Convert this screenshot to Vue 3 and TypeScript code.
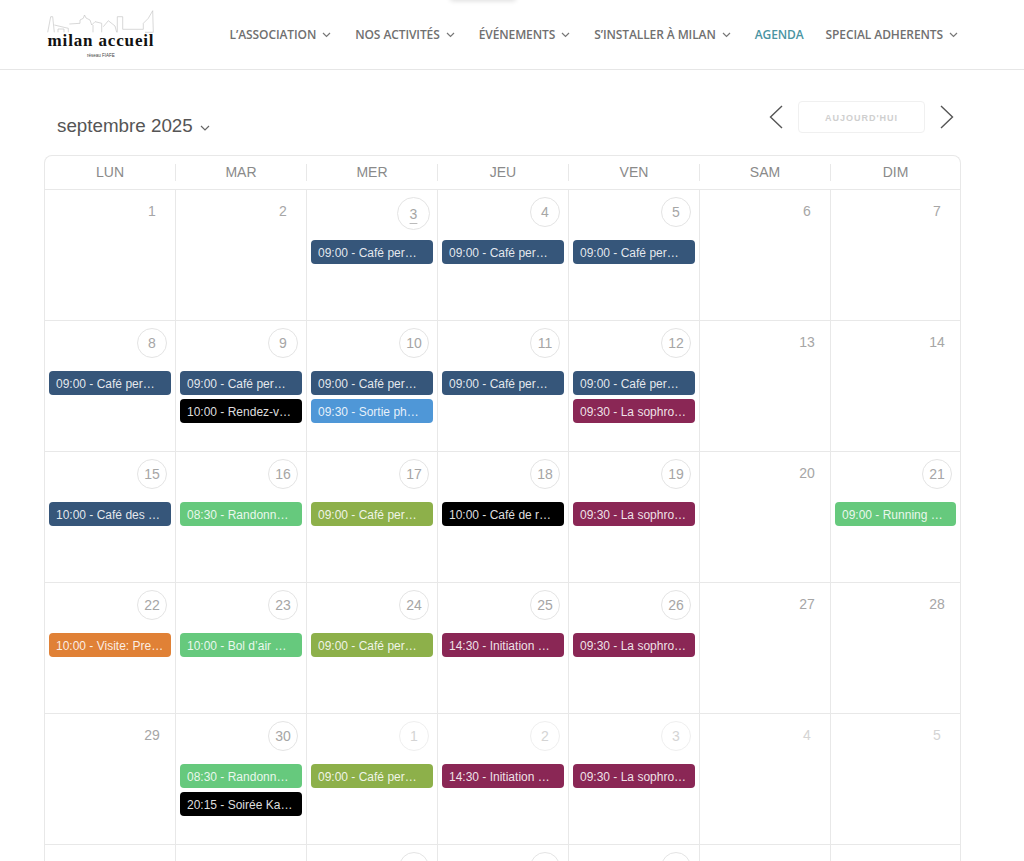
<script setup lang="ts">
interface Ev { label: string; color: string }
interface Day { n: number | null; circle?: 'big' | 'small'; faded?: boolean; events: Ev[] }

const navy = '#36567a', wine = '#8a2755', black = '#000000', green = '#66c97d', olive = '#8db04a', sky = '#4f97d7', orange = '#e08136'
const cafe = (c = navy): Ev => ({ label: '09:00 - Café per…', color: c })
const soph: Ev = { label: '09:30 - La sophro…', color: wine }
const rando: Ev = { label: '08:30 - Randonn…', color: green }
const init: Ev = { label: '14:30 - Initiation …', color: wine }

const nav = [
  { t: 'L’ASSOCIATION', c: true },
  { t: 'NOS ACTIVITÉS', c: true },
  { t: 'ÉVÉNEMENTS', c: true },
  { t: 'S’INSTALLER À MILAN', c: true },
  { t: 'AGENDA', c: false, active: true },
  { t: 'SPECIAL ADHERENTS', c: true },
]
const heads = ['LUN', 'MAR', 'MER', 'JEU', 'VEN', 'SAM', 'DIM']

const days: Day[] = [
  { n: 1, events: [] }, { n: 2, events: [] },
  { n: 3, circle: 'big', events: [cafe()] }, { n: 4, circle: 'small', events: [cafe()] }, { n: 5, circle: 'small', events: [cafe()] },
  { n: 6, events: [] }, { n: 7, events: [] },
  { n: 8, circle: 'small', events: [cafe()] },
  { n: 9, circle: 'small', events: [cafe(), { label: '10:00 - Rendez-v…', color: black }] },
  { n: 10, circle: 'small', events: [cafe(), { label: '09:30 - Sortie ph…', color: sky }] },
  { n: 11, circle: 'small', events: [cafe()] },
  { n: 12, circle: 'small', events: [cafe(), soph] },
  { n: 13, events: [] }, { n: 14, events: [] },
  { n: 15, circle: 'small', events: [{ label: '10:00 - Café des …', color: navy }] },
  { n: 16, circle: 'small', events: [rando] },
  { n: 17, circle: 'small', events: [cafe(olive)] },
  { n: 18, circle: 'small', events: [{ label: '10:00 - Café de r…', color: black }] },
  { n: 19, circle: 'small', events: [soph] },
  { n: 20, events: [] },
  { n: 21, circle: 'small', events: [{ label: '09:00 - Running …', color: green }] },
  { n: 22, circle: 'small', events: [{ label: '10:00 - Visite: Pre…', color: orange }] },
  { n: 23, circle: 'small', events: [{ label: '10:00 - Bol d’air …', color: green }] },
  { n: 24, circle: 'small', events: [cafe(olive)] },
  { n: 25, circle: 'small', events: [init] },
  { n: 26, circle: 'small', events: [soph] },
  { n: 27, events: [] }, { n: 28, events: [] },
  { n: 29, events: [] },
  { n: 30, circle: 'small', events: [rando, { label: '20:15 - Soirée Ka…', color: black }] },
  { n: 1, circle: 'small', faded: true, events: [cafe(olive)] },
  { n: 2, circle: 'small', faded: true, events: [init] },
  { n: 3, circle: 'small', faded: true, events: [soph] },
  { n: 4, faded: true, events: [] }, { n: 5, faded: true, events: [] },
  { n: null, events: [] }, { n: null, events: [] },
  { n: null, circle: 'small', events: [] }, { n: null, circle: 'small', events: [] }, { n: null, circle: 'small', events: [] },
  { n: null, events: [] }, { n: null, events: [] },
]
</script>

<template>
  <div class="page">
    <div class="top-shadow"></div>
    <header class="site-head">
      <div class="logo">
        <svg class="skyline" width="108" height="24" viewBox="0 0 108 24" fill="none" stroke="#bdbdbd" stroke-width="0.6">
          <path d="M0.7 22.3 L3.7 6.7 L5.7 6.7 L7.3 22.3 M7.3 15 L21.3 18.3 L21.3 22.3 M11 22.3 L11 19 L17 19 L17 22.3 M22.3 14 L33 13.3 L33 10 L36.3 8.3 L37.5 5 L39 8 L43 10 L44.7 15 L48 11.7 L54.7 13.3 L54.7 22.3 M46 15 L46 22.3 M56.3 16.7 L61.3 10.7 L68 16 L69.7 22.3 M70.3 22.3 L70.3 6.7 L75.7 6.7 L75.7 19.3 L96.3 19.3 L96.3 13.3 L101.3 8.3 L105.7 0.7 L106.3 22.3 L98 22.3" />
        </svg>
        <div class="logo-name">milan accueil</div>
        <div class="logo-sub">réseau FIAFE</div>
      </div>
      <nav class="menu">
        <a v-for="item in nav" :key="item.t" class="menu-item" :class="{ active: item.active, plain: !item.c }">
          {{ item.t }}
          <svg v-if="item.c" width="9" height="6" viewBox="0 0 9 6" fill="none" stroke="#777" stroke-width="1.2"><path d="M1 1 L4.5 4.5 L8 1" /></svg>
        </a>
      </nav>
    </header>

    <main class="agenda">
      <div class="toolbar">
        <div class="month">
          septembre 2025
          <svg width="10" height="6" viewBox="0 0 10 6" fill="none" stroke="#666" stroke-width="1.2"><path d="M1 1 L5 5 L9 1" /></svg>
        </div>
        <div class="pager">
          <svg width="14" height="24" viewBox="0 0 14 24" fill="none" stroke="#555" stroke-width="1.4"><path d="M13 1 L1.5 12 L13 23" /></svg>
          <button class="today">AUJOURD'HUI</button>
          <svg width="14" height="24" viewBox="0 0 14 24" fill="none" stroke="#555" stroke-width="1.4"><path d="M1 1 L12.5 12 L1 23" /></svg>
        </div>
      </div>

      <div class="calendar">
        <div class="heads">
          <div v-for="h in heads" :key="h" class="head"><span>{{ h }}</span></div>
        </div>
        <div class="grid">
          <div v-for="(d, i) in days" :key="i" class="cell">
            <div class="date-row">
              <span class="date" :class="{ circle: d.circle === 'small', big: d.circle === 'big', faded: d.faded }">{{ d.n }}</span>
            </div>
            <div v-for="(e, j) in d.events" :key="j" class="event" :style="{ background: e.color }">{{ e.label }}</div>
          </div>
        </div>
      </div>
    </main>
  </div>
</template>

<style>
html, body { margin: 0; background: #fff; overflow: hidden; }
</style>

<style scoped>
.page {
  position: relative;
  width: 1024px;
  height: 861px;
  overflow: hidden;
  background: #fff;
  font-family: "Liberation Sans", Arial, sans-serif;
}
.top-shadow {
  position: absolute;
  left: 450px;
  top: -6px;
  width: 66px;
  height: 6px;
  border-radius: 6px;
  box-shadow: 0 1px 5px rgba(0, 0, 0, 0.14);
}
.site-head {
  height: 69px;
  border-bottom: 1px solid #e6e6e6;
  display: flex;
  align-items: flex-start;
  justify-content: space-between;
}
.logo {
  margin: 10px 0 0 47px;
  width: 108px;
  display: flex;
  flex-direction: column;
  align-items: center;
}
.skyline { display: block; }
.logo-name {
  font-family: "Liberation Serif", serif;
  font-weight: 700;
  font-size: 17px;
  line-height: 14px;
  letter-spacing: 0.85px;
  color: #111;
  white-space: nowrap;
}
.logo-sub {
  font-size: 4.5px;
  line-height: 6px;
  margin-top: 5px;
  color: #444;
}
.menu {
  display: flex;
  margin: 27px 66px 0 0;
  gap: 24px;
}
.menu-item {
  font-family: "Open Sans", sans-serif;
  font-weight: 600;
  font-size: 12px;
  line-height: 16px;
  letter-spacing: -0.1px;
  color: #707070;
  display: flex;
  align-items: center;
  gap: 6px;
  white-space: nowrap;
}
.menu-item.active { color: #4a94a2; }
.menu-item.plain { margin-right: -2px; }
.agenda {
  width: 917px;
  margin-left: 44px;
}
.toolbar {
  height: 85px;
  display: flex;
  justify-content: space-between;
  align-items: flex-start;
}
.month {
  margin: 45px 0 0 13px;
  font-size: 18.8px;
  line-height: 22px;
  color: #555;
  display: flex;
  align-items: center;
  gap: 7px;
}
.month svg { margin-top: 3px; }
.pager {
  margin: 31px 7px 0 0;
  display: flex;
  align-items: center;
  gap: 15px;
}
.today {
  width: 127px;
  height: 32px;
  box-sizing: border-box;
  border: 1px solid #f0f0f0;
  border-radius: 4px;
  background: #fff;
  color: #cfcfcf;
  font-family: "Liberation Sans", Arial, sans-serif;
  font-weight: 700;
  font-size: 9px;
  letter-spacing: 1px;
  padding: 1px 0 0;
}
.calendar {
  border: 1px solid #e8e8e8;
  border-bottom: none;
  border-radius: 8px 8px 0 0;
  box-sizing: border-box;
  width: 917px;
}
.heads {
  display: grid;
  grid-template-columns: 130px repeat(5, 131px) 130px;
  height: 33px;
  align-items: center;
}
.head {
  text-align: center;
  font-size: 14px;
  color: #8a8a8a;
  height: 17px;
  line-height: 17px;
  border-left: 1px solid #e8e8e8;
}
.head:first-child { border-left: none; }
.grid {
  display: grid;
  grid-template-columns: 130px repeat(5, 131px) 130px;
  grid-auto-rows: 131px;
}
.cell {
  box-sizing: border-box;
  border-top: 1px solid #e8e8e8;
  border-left: 1px solid #e8e8e8;
  padding: 0 4px;
}
.cell:nth-child(7n + 1) { border-left: none; }
.date-row {
  height: 50px;
  display: flex;
  justify-content: flex-end;
  align-items: flex-start;
}
.date {
  font-size: 14px;
  color: #a6a6a6;
  box-sizing: border-box;
  display: flex;
  align-items: center;
  justify-content: center;
  width: 30px;
  height: 30px;
  margin: 6px 4px 0 0;
}
.date.circle {
  border: 1px solid #e4e4e4;
  border-radius: 50%;
  margin-top: 7px;
}
.date.big {
  width: 33px;
  height: 33px;
  margin: 7px 3px 0 0;
  border: 1px solid #e4e4e4;
  border-radius: 50%;
  text-decoration: underline;
  text-underline-offset: 4px;
  text-decoration-color: #bbb;
}
.date.faded { color: #d4d4d4; }
.date.faded.circle { border-color: #efefef; }
.event {
  box-sizing: border-box;
  width: 122px;
  height: 24px;
  line-height: 27px;
  border-radius: 4px;
  margin-bottom: 4px;
  padding-left: 7px;
  color: rgba(255, 255, 255, 0.88);
  font-size: 12px;
  white-space: nowrap;
  overflow: hidden;
}
.cell:nth-child(7n) .event { width: 121px; }
</style>
